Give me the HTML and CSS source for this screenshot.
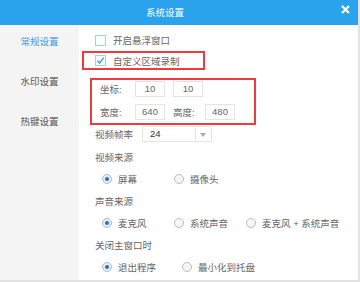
FILE: index.html
```html
<!DOCTYPE html>
<html lang="zh-CN">
<head>
  <meta charset="UTF-8">
  <title>系统设置</title>
  <link rel="stylesheet" href="styles.css">
</head>
<body>
  <div class="window">
    <div class="titlebar">
      系统设置
      <span class="close">
        <svg width="9" height="9" viewBox="0 0 9 9"><path d="M1 1L8 8M8 1L1 8" stroke="#fff" stroke-width="2.2"/></svg>
      </span>
    </div>
    <div class="content">
      <ul class="sidebar">
        <li class="active">常规设置</li>
        <li>水印设置</li>
        <li>热键设置</li>
      </ul>
      <div class="main">
        <div class="row first">
          <span class="box"></span>开启悬浮窗口
        </div>
        <div class="mark mark-line">
          <span class="box">
            <svg width="11" height="11" viewBox="0 0 11 11"><path d="M2.5 5.8L4.6 8L8.8 2.6" fill="none" stroke="#3aa4dc" stroke-width="1.5"/></svg>
          </span>自定义区域录制
        </div>
        <div class="mark mark-area">
          <div class="field-row">
            <span class="flabel">坐标:</span>
            <span class="input">10</span>
            <span class="input gap">10</span>
          </div>
          <div class="field-row">
            <span class="flabel">宽度:</span>
            <span class="input">640</span>
            <span class="flabel short gap">高度:</span>
            <span class="input">480</span>
          </div>
        </div>
        <div class="select-row">
          <span class="slabel">视频帧率</span>
          <span class="select">
            <span class="value">24</span>
            <span class="arrow"></span>
          </span>
        </div>
        <div class="row">视频来源</div>
        <div class="row options">
          <span class="opt"><span class="radio on"></span>屏幕</span>
          <span class="opt"><span class="radio"></span>摄像头</span>
        </div>
        <div class="row">声音来源</div>
        <div class="row options">
          <span class="opt"><span class="radio on"></span>麦克风</span>
          <span class="opt"><span class="radio"></span>系统声音</span>
          <span class="opt"><span class="radio"></span>麦克风 + 系统声音</span>
        </div>
        <div class="row">关闭主窗口时</div>
        <div class="row options">
          <span class="opt wide"><span class="radio on"></span>退出程序</span>
          <span class="opt"><span class="radio"></span>最小化到托盘</span>
        </div>
      </div>
    </div>
  </div>
</body>
</html>
```

FILE: styles.css
```css
body {
  margin: 0;
  background: #fff;
  font-family: "Liberation Sans", "Noto Sans CJK SC", sans-serif;
  font-size: 9.5px;
  color: #666;
}
.window {
  width: 360px;
  height: 282px;
  box-sizing: border-box;
  border-right: 2px solid #e2e2e2;
  border-bottom: 2px solid #e2e2e2;
  display: flex;
  flex-direction: column;
  overflow: hidden;
}
.titlebar {
  position: relative;
  height: 25px;
  line-height: 25px;
  background: #2aa2ec;
  color: #fff;
  text-align: center;
  padding-right: 28px;
  font-size: 9.5px;
}
.close {
  position: absolute;
  top: 5px;
  right: 8px;
  line-height: 0;
}
.content {
  flex: 1;
  display: flex;
}
.sidebar {
  list-style: none;
  margin: 0;
  padding: 7px 0 0;
  width: 79px;
  background: #f4f4f4;
  display: flex;
  flex-direction: column;
  gap: 20px;
}
.sidebar li {
  line-height: 20px;
  text-align: center;
  color: #555;
}
.sidebar li.active {
  color: #3a9de6;
}
.main {
  flex: 1;
  padding: 5px 0 0 16px;
  display: flex;
  flex-direction: column;
}
.row {
  height: 22px;
  display: flex;
  align-items: center;
}
.row.first {
  height: 20px;
}
.box {
  width: 11px;
  height: 11px;
  box-sizing: border-box;
  border: 1px solid #94d6ea;
  margin-right: 7px;
  line-height: 0;
}
.box svg {
  margin: -1px 0 0 -1px;
}
.mark {
  box-sizing: border-box;
  border: 2px solid #f03a3d;
}
.mark-line {
  margin: 1px 0 0 -13px;
  width: 123px;
  height: 19px;
  padding-left: 11px;
  display: flex;
  align-items: center;
}
.mark-area {
  margin: 8px 0 0 -5px;
  width: 166px;
  height: 47px;
  padding: 1px 0 0 8px;
  display: flex;
  flex-direction: column;
  gap: 7px;
}
.field-row {
  height: 16px;
  display: flex;
  align-items: center;
}
.flabel {
  width: 35px;
}
.flabel.short {
  width: 32px;
}
.gap {
  margin-left: 8px;
}
.input {
  width: 30px;
  height: 16px;
  box-sizing: border-box;
  border: 1px solid #e4e4e4;
  line-height: 14px;
  text-align: center;
}
.select-row {
  margin-top: 1px;
  height: 16px;
  display: flex;
  align-items: center;
  margin-bottom: 4px;
}
.slabel {
  width: 47px;
}
.select {
  width: 70px;
  height: 16px;
  box-sizing: border-box;
  border: 1px solid #e4e4e4;
  display: flex;
}
.select .value {
  flex: 1;
  padding-left: 7px;
  line-height: 14px;
  color: #333;
}
.select .arrow {
  width: 15px;
  border-left: 1px solid #e4e4e4;
  position: relative;
}
.select .arrow::after {
  content: "";
  position: absolute;
  left: 4px;
  top: 6px;
  border-left: 3.5px solid transparent;
  border-right: 3.5px solid transparent;
  border-top: 4px solid #aaa;
}
.options {
  padding-left: 7px;
}
.opt {
  width: 72px;
  display: flex;
  align-items: center;
}
.opt:last-child {
  width: auto;
}
.opt.wide {
  width: 80px;
}
.radio {
  width: 10px;
  height: 10px;
  box-sizing: border-box;
  border: 1px solid #bcbcbc;
  border-radius: 50%;
  background: #f6f6f6;
  margin-right: 6px;
  position: relative;
}
.radio.on {
  background: #e4eef6;
  border-color: #a9bccb;
}
.radio.on::after {
  content: "";
  position: absolute;
  left: 2px;
  top: 2px;
  width: 4px;
  height: 4px;
  border-radius: 50%;
  background: #2e6fa8;
}
```
